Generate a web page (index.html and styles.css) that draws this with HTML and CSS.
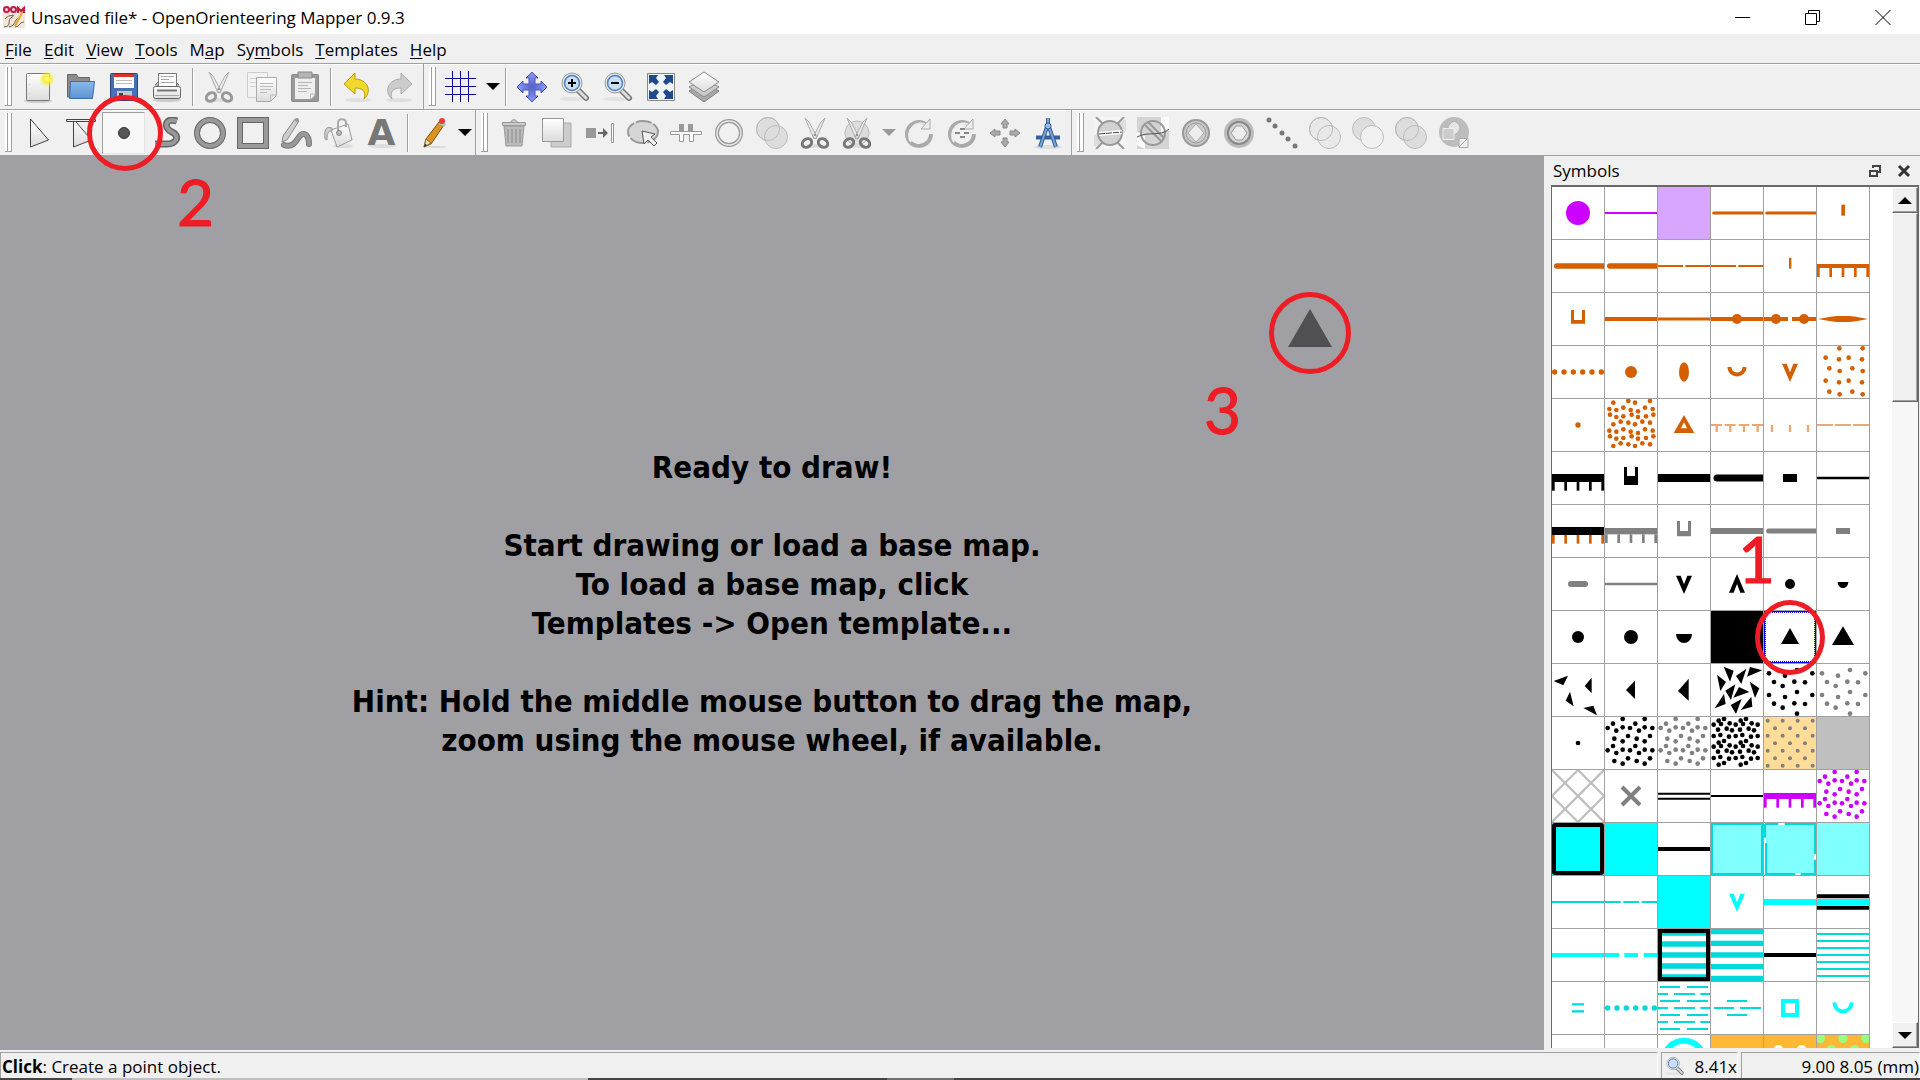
FILE: index.html
```html
<!DOCTYPE html>
<html lang="en">
<head>
	<meta charset="UTF-8">
	<title>Unsaved file* - OpenOrienteering Mapper 0.9.3</title>
	<link rel="stylesheet" href="styles.css">
</head>
<body>
<svg class="defs" aria-hidden="true">
	<defs> <!-- gradients and shapes shared by the toolbar icons -->
		<linearGradient id="paper" x1="0" y1="0" x2="0" y2="1"><stop offset="0" stop-color="#fff"/><stop offset="1" stop-color="#dcdcdc"/></linearGradient>
		<linearGradient id="blue" x1="0" y1="0" x2="0" y2="1"><stop offset="0" stop-color="#8db8e6"/><stop offset="1" stop-color="#5a93d2"/></linearGradient>
		<radialGradient id="sun"><stop offset="0" stop-color="#fffcc0"/><stop offset=".4" stop-color="#f8ee30"/><stop offset="1" stop-color="#f8ee30" stop-opacity="0"/></radialGradient>
		<radialGradient id="move"><stop offset="0" stop-color="#5560c8"/><stop offset="1" stop-color="#8e9bf8"/></radialGradient>
		<symbol id="scissors" viewBox="0 0 32 32">
			<ellipse cx="16" cy="29" rx="11" ry="2" fill="#dedede"/>
			<path d="M6 1l4 4 8 15-3 2zM26 1l-4 4-8 15 3 2z" fill="#ececec" stroke="#aaa"/>
			<circle cx="16" cy="18" r="1" fill="#888"/>
			<ellipse cx="8" cy="26" rx="5" ry="4" transform="rotate(-35 8 26)" fill="none" stroke="currentColor" stroke-width="3"/>
			<ellipse cx="24" cy="26" rx="5" ry="4" transform="rotate(35 24 26)" fill="none" stroke="currentColor" stroke-width="3"/>
		</symbol>
		<symbol id="lens" viewBox="0 0 32 32">
			<ellipse cx="14" cy="28" rx="13" ry="2" fill="#e2e2e2"/>
			<path d="M19 19l8 8" stroke="#777" stroke-width="6" stroke-linecap="round"/>
			<path d="M19 19l8 8" stroke="#ddd" stroke-width="3" stroke-linecap="round"/>
			<circle cx="13" cy="12" r="10" fill="#e8e8e8" stroke="#999"/>
			<circle cx="13" cy="12" r="7.5" fill="#c9ddf3" stroke="#4f7fb8" stroke-width="1.5"/>
		</symbol>
		<symbol id="pencil" viewBox="-4 0 32 32">
			<ellipse cx="15" cy="30" rx="10" ry="1" fill="#d8d8d8"/>
			<path d="M18 5l5 3-13 19-7 3 2-8z" fill="#d9951f" stroke="#7c5216"/>
			<path d="M5 22l5 4-7 4z" fill="#f3dcae" stroke="#8a6a3a"/>
			<path d="M3 30l1-3 2 1z" fill="#222"/>
			<path d="M18 7l5 3 2-3-5-4z" fill="#bbb"/>
			<circle cx="21" cy="4" r="3" fill="#ee3a3a"/>
		</symbol>
		<symbol id="discs" viewBox="0 0 32 32">
			<circle cx="12" cy="12" r="11.5"/><circle cx="20" cy="20" r="11.5"/><circle cx="12" cy="12" r="11.5" fill="none"/>
		</symbol>
	</defs>
</svg>
<div class="window">
	<header class="title-bar">
		<svg class="app-logo" viewBox="0 0 22 22"><rect width="22" height="22" fill="#f1e6da"/><path d="M1 21C10 20 3 14 9 11S4 9 2 13M6 21c8-2 4-7 10-9M12 21c6-1 3-4 9-5" fill="none" stroke="#6b5b50"/><path d="M20 5L12 20" stroke="#e8a52c" stroke-width="2"/><circle cx="3.500" cy="3.500" r="2.500" fill="none" stroke="#c41846" stroke-width="2"/><circle cx="10.500" cy="3.500" r="2.500" fill="none" stroke="#c41846" stroke-width="2"/><path d="M15 7V2l3 3 3-3v5" fill="none" stroke="#c41846" stroke-width="2"/></svg>
		<h1 class="title">Unsaved file* - OpenOrienteering Mapper 0.9.3</h1>
		<div class="window-buttons">
			<button class="window-button" aria-label="Minimize"><svg viewBox="0 0 16 16"><path d="M0 8.500h15"/></svg></button>
			<button class="window-button" aria-label="Restore"><svg viewBox="0 0 16 16"><path d="M.5 4.500h11v11H.5zM3.500 4V1.500h11v11H12"/></svg></button>
			<button class="window-button" aria-label="Close"><svg viewBox="0 0 16 16"><path d="M.5 1l15 15M15.500 1l-15 15"/></svg></button>
		</div>
	</header>
	<nav class="menu-bar">
		<a class="menu" href="#"><u>F</u>ile</a>
		<a class="menu" href="#"><u>E</u>dit</a>
		<a class="menu" href="#"><u>V</u>iew</a>
		<a class="menu" href="#"><u>T</u>ools</a>
		<a class="menu" href="#">M<u>a</u>p</a>
		<a class="menu" href="#">Sy<u>m</u>bols</a>
		<a class="menu" href="#"><u>T</u>emplates</a>
		<a class="menu" href="#"><u>H</u>elp</a>
	</nav>

	<div class="toolbar-row">
		<div class="toolbar"> <!-- file and edit -->
			<button class="tool" aria-label="New"><svg viewBox="0 0 32 32"><ellipse cx="16" cy="30" rx="14" ry="2" fill="#ccc"/><rect x="4.500" y="2.500" width="23" height="27" rx="1" fill="url(#paper)" stroke="#777"/><path d="M7.500 4v24" stroke="#ccc" stroke-dasharray="1 8"/><circle cx="25" cy="8" r="8" fill="url(#sun)"/></svg></button>
			<button class="tool" aria-label="Open"><svg viewBox="0 0 32 32"><path d="M2.500 26V3.500h9l2 3h11V26z" fill="#8c8c8c" stroke="#666"/><path d="M5.500 10.500h24l-2 17h-23z" fill="url(#blue)" stroke="#3d6ea8"/></svg></button>
			<button class="tool" aria-label="Save"><svg viewBox="0 0 32 32"><rect x="2.500" y="2.500" width="27" height="27" rx="1" fill="#4671b5" stroke="#29467c"/><path d="M6 3h20v14H6z" fill="#fff"/><path d="M6 3h20v3H6z" fill="#d8332c"/><path d="M8 9.500h16M8 12.500h16" stroke="#bbb"/><path d="M9 20h15v9H9z" fill="#c6c6c6"/><path d="M11 22h4v7h-4z" fill="#444"/></svg></button>
			<button class="tool" aria-label="Print"><svg viewBox="0 0 32 32"><ellipse cx="16" cy="29" rx="14" ry="2" fill="#ccc"/><path d="M4 14l3-3h18l3 3z" fill="#ddd" stroke="#777"/><path d="M7.500 2.500h18v13h-18z" fill="#fff" stroke="#777"/><path d="M10 5.500h13M10 8.500h8M10 11.500h13" stroke="#aaa"/><rect x="2.500" y="15.500" width="27" height="12" rx="2" fill="url(#paper)" stroke="#666"/><path d="M6 19.500h20" stroke="#777" stroke-width="2"/><path d="M4 24.500h24" stroke="#aaa"/></svg></button>
			<span class="separator"></span>
			<button class="tool grey" aria-label="Cut"><svg><use href="#scissors"/></svg></button>
			<button class="tool" aria-label="Copy"><svg viewBox="0 0 32 32"><path d="M1.500 1.500h20v25h-20z" fill="#f2f2f2" stroke="#ccc"/><path d="M4 7.500h14M4 11.500h8M4 15.500h8" stroke="#d2d2d2"/><path d="M10.500 6.500h20v18l-6 6h-14z" fill="url(#paper)" stroke="#aaa"/><path d="M14 12.500h13M14 15.500h13M14 18.500h11M14 21.500h7M24.500 30v-6h6" fill="none" stroke="#bbb"/></svg></button>
			<button class="tool" aria-label="Paste"><svg viewBox="0 0 32 32"><rect x="2.500" y="3.500" width="27" height="27" rx="1" fill="#999" stroke="#888"/><path d="M6 7h20v17l-4 4H6z" fill="#eee"/><path d="M9 1h14v6H9z" fill="#b5b5b5" stroke="#888"/><path d="M9 11.500h14M9 14.500h10M9 17.500h13M9 20.500h9M21.500 28v-5h5" fill="none" stroke="#b5b5b5"/></svg></button>
			<span class="separator"></span>
			<button class="tool" aria-label="Undo"><svg viewBox="0 0 32 32"><ellipse cx="17" cy="29" rx="13" ry="2" fill="#dedede"/><path d="M3 13L14 2v6c12 0 18 12 9 20 3-8-2-11-9-11v6z" fill="#f0d92c" stroke="#b99b0c"/></svg></button>
			<button class="tool" aria-label="Redo"><svg viewBox="0 0 32 32"><ellipse cx="15" cy="29" rx="13" ry="2" fill="#dedede"/><path d="M28 13L17 2v6C5 8-1 20 8 28c-3-8 2-11 9-11v6z" fill="#ccc" stroke="#aaa"/></svg></button>
		</div>
		<div class="toolbar"> <!-- view -->
			<button class="tool wide" aria-label="Show grid"><svg viewBox="0 0 32 32"><path d="M0 7.500h31M0 15.500h31M0 23.500h31M7.500 0v31M15.500 0v31M23.500 0v31" stroke="#000080" fill="none"/></svg><span class="arrow"></span></button>
			<span class="separator"></span>
			<button class="tool" aria-label="Move"><svg viewBox="0 0 32 32"><path d="M16 1l6 6h-3v6h6v-3l6 6-6 6v-3h-6v6h3l-6 6-6-6h3v-6H7v3l-6-6 6-6v3h6V7h-3z" fill="url(#move)" stroke="#4a55b8"/></svg></button>
			<button class="tool" aria-label="Zoom in"><svg viewBox="0 0 32 32"><use href="#lens"/><path d="M9 12h8M13 8v8" stroke="#000" stroke-width="2"/></svg></button>
			<button class="tool" aria-label="Zoom out"><svg viewBox="0 0 32 32"><use href="#lens"/><path d="M9 12h8" stroke="#000" stroke-width="2"/></svg></button>
			<button class="tool" aria-label="Show whole map"><svg viewBox="0 0 32 32"><path d="M2.500 2.500h27v27h-27z" fill="#eef3f4" stroke="#888"/><path d="M4 4h9l-2 3 3 4-3 3-4-3-3 2zM28 4h-9l2 3-3 4 3 3 4-3 3 2zM4 28h9l-2-3 3-4-3-3-4 3-3-2zM28 28h-9l2-3-3-4 3-3 4 3 3-2z" fill="#204a87"/></svg></button>
			<button class="tool" aria-label="Layers"><svg viewBox="0 0 32 32"><path d="M1 20l15-8 15 8-15 11z" fill="#aaa" stroke="#777"/><path d="M1 16l15-8 15 8-15 10z" fill="#ccc" stroke="#888"/><path d="M1 11L16 1l15 10-15 10z" fill="url(#paper)" stroke="#888"/></svg></button>
		</div>
	</div>

	<div class="toolbar-row">
		<div class="toolbar"> <!-- drawing tools -->
			<button class="tool" aria-label="Edit objects"><svg viewBox="0 0 32 32"><path d="M8.500 2v28l18-7z" fill="url(#paper)" stroke="#444"/></svg></button>
			<button class="tool" aria-label="Edit lines"><svg viewBox="0 0 32 32"><path d="M8.500 2v28l18-7z" fill="url(#paper)" stroke="#444"/><path d="M1.500 2.500h29v2h-29z" fill="#eee" stroke="#444"/></svg></button>
			<button class="tool pressed" aria-label="Set point objects">
				<svg viewBox="0 0 32 32"><circle cx="16" cy="16" r="5.500" fill="#555" stroke="#333"/></svg>
				<span class="mark mark-tool"><span class="digit">2</span></span>
			</button>
			<button class="tool" aria-label="Draw paths"><svg viewBox="0 0 32 32"><path d="M26 4c-12-4-14 7-5 11s4 13-7 12H4" fill="none" stroke="#666" stroke-width="7"/><path d="M26 4c-12-4-14 7-5 11s4 13-7 12H4" fill="none" stroke="#999" stroke-width="4"/></svg></button>
			<button class="tool" aria-label="Draw circles"><svg viewBox="0 0 32 32"><g fill="none"><circle cx="16" cy="16" r="13" stroke="#666" stroke-width="6"/><circle cx="16" cy="16" r="13" stroke="#999" stroke-width="4"/></g></svg></button>
			<button class="tool" aria-label="Draw rectangles"><svg viewBox="0 0 32 32"><g fill="none"><path d="M3 3h26v26H3z" stroke="#666" stroke-width="6"/><path d="M3 3h26v26H3z" stroke="#999" stroke-width="4"/></g></svg></button>
			<button class="tool" aria-label="Draw free-handedly"><svg viewBox="0 0 32 32"><g fill="none" stroke-linecap="round"><path d="M4 28c8 3 12-3 15-8 4-6 10-3 10 7" stroke="#777" stroke-width="6"/><path d="M4 28c8 3 12-3 15-8 4-6 10-3 10 7" stroke="#999" stroke-width="4"/></g><path d="M15 2l4 2-12 19-5 2 1-6z" fill="#ccc" stroke="#888"/><circle cx="17" cy="3" r="2" fill="#999"/></svg></button>
			<button class="tool" aria-label="Fill bounded areas"><svg viewBox="0 0 32 32"><ellipse cx="20" cy="29" rx="10" ry="2" fill="#ddd"/><path d="M8 13l17-6 4 16-15 7z" fill="url(#paper)" stroke="#999"/><path d="M15 15V6c0-5 8-5 8 0v4" fill="none" stroke="#aaa" stroke-width="2"/><path d="M9 11C3 9 1 12 2 22l2 1c0-6 1-9 5-9z" fill="#ccc" stroke="#999"/><circle cx="16" cy="16" r="2.500" fill="#bbb" stroke="#888"/></svg></button>
			<button class="tool" aria-label="Write text"><svg viewBox="0 0 32 32"><ellipse cx="16" cy="29" rx="14" ry="2" fill="#ddd"/></svg><b class="letter">A</b></button>
			<span class="separator"></span>
			<button class="tool wide" aria-label="Paint on template"><svg><use href="#pencil"/></svg><span class="arrow"></span></button>
		</div>
		<div class="toolbar"> <!-- object editing -->
			<button class="tool" aria-label="Delete"><svg viewBox="0 0 32 32"><path d="M6 9h20l-2 20H8z" fill="#bbb" stroke="#999"/><path d="M10 12v14M14 12v14M18 12v14M22 12v14" stroke="#888"/><path d="M4.500 5.500h23v3h-23zM13 5c0-3 6-3 6 0" fill="#ccc" stroke="#999"/></svg></button>
			<button class="tool" aria-label="Duplicate"><svg viewBox="0 0 32 32"><path d="M10 6h20v24H10z" fill="#ccc" stroke="#aaa"/><path d="M1.500 1.500h21v23h-21z" fill="url(#paper)" stroke="#999"/></svg></button>
			<button class="tool" aria-label="Switch symbol"><svg viewBox="0 0 32 32"><path d="M2 11h10v10H2z" fill="#999"/><path d="M14 16h6" stroke="#666" stroke-width="2"/><path d="M19 11l5 5-5 5z" fill="#666"/><path d="M27.500 6.500h2v19h-2z" fill="#fff" stroke="#999"/></svg></button>
			<button class="tool" aria-label="Fill / create border"><svg viewBox="0 0 32 32"><ellipse cx="16" cy="15" rx="15" ry="11" fill="#d6d6d6" stroke="#999" stroke-width="2" stroke-dasharray="16 2"/><path d="M15 14l13 3-4 3 6 6-3 3-6-6-4 4z" fill="#eee" stroke="#555"/></svg></button>
			<button class="tool" aria-label="Switch dashes"><svg viewBox="0 0 32 32"><path d="M9 7h5v10H9zM18 7h5v10h-5z" fill="#999"/><path d="M.5 14.500h31v3h-8v7h-4v-7h-6v7h-4v-7h-9z" fill="#fff" stroke="#999"/></svg></button>
			<button class="tool" aria-label="Connect paths"><svg viewBox="0 0 32 32"><g fill="none"><circle cx="16" cy="16" r="12" stroke="#999" stroke-width="4"/><circle cx="16" cy="16" r="12" stroke="#e8e8e8" stroke-width="1.500"/></g></svg></button>
			<button class="tool" aria-label="Unify areas"><svg class="discs"><use href="#discs"/></svg></button>
			<button class="tool dark" aria-label="Cut object"><svg><use href="#scissors"/></svg></button>
			<button class="tool wide dark" aria-label="Cut away"><svg viewBox="0 0 32 32"><circle cx="16" cy="16" r="12" fill="#ddd" stroke="#bbb"/><use href="#scissors"/></svg><span class="arrow pale"></span></button>
			<button class="tool" aria-label="Rotate objects"><svg viewBox="0 0 32 32"><path d="M24 8a12 12 0 1 0 4 9" fill="none" stroke="#aaa" stroke-width="4"/><path d="M24 8a12 12 0 0 0-16 17" fill="none" stroke="#eee" stroke-width="2"/><path d="M27 2v10H18z" fill="#eee" stroke="#aaa"/></svg></button>
			<button class="tool" aria-label="Rotate pattern"><svg viewBox="0 0 32 32"><path d="M24 8a12 12 0 1 0 4 9" fill="none" stroke="#aaa" stroke-width="4"/><path d="M24 8a12 12 0 0 0-16 17" fill="none" stroke="#eee" stroke-width="2"/><path d="M27 2v10H18z" fill="#eee" stroke="#aaa"/><path d="M14 12h5M9 16h5M18 16h5M14 20h5" stroke="#888" stroke-width="2"/></svg></button>
			<button class="tool" aria-label="Scale objects"><svg viewBox="0 0 32 32"><path d="M16 2l4 5h-2v4h-4V7h-2zM16 30l4-5h-2v-4h-4v4h-2zM1 16l5-4v2h5v4H6v2zM31 16l-5-4v2h-5v4h5v2z" fill="#aaa" stroke="#888"/></svg></button>
			<button class="tool" aria-label="Measure lengths and areas"><svg viewBox="0 0 32 32"><ellipse cx="16" cy="30" rx="14" ry="2" fill="#ddd"/><path d="M16 1v6M15 10L8 30M17 10l7 20M4 20.500h24" fill="none" stroke="#34619a" stroke-width="4"/><path d="M16 1v6M15 10L8 30M17 10l7 20" fill="none" stroke="#7ba3d4" stroke-width="2"/><circle cx="16" cy="9" r="3" fill="#9bbce2" stroke="#34619a"/></svg></button>
		</div>
		<div class="toolbar"> <!-- advanced editing -->
			<button class="tool" aria-label="Cutout"><svg viewBox="0 0 32 32"><path d="M0 0h32v32H0z" fill="#f5f5f5"/><path d="M0 18l8-4v12L0 30zM24 6l8-4v12l-8 8z" fill="#ddd"/><path d="M2 0l8 8M30 0l-8 8M2 32l8-8M22 24l8 8" stroke="#999" stroke-width="2"/><circle cx="16" cy="16" r="12" fill="#d2d2d2" stroke="#999" stroke-width="2"/><path d="M5 17l23-2" stroke="#fff" stroke-width="4"/><path d="M5 17l23-2" stroke="#444" stroke-dasharray="6 1"/></svg></button>
			<button class="tool" aria-label="Cut away area"><svg viewBox="0 0 32 32"><path d="M0 0h32v32H0z" fill="#d4d4d4"/><path d="M0 15l8 4v13L0 28zM24 0h8v12l-8 4z" fill="#fafafa"/><circle cx="16" cy="16" r="12" fill="none" stroke="#999" stroke-width="2"/><path d="M7 7l18 18M11 5l16 16" stroke="#999" stroke-width="2"/><path d="M0 20c10-6 24 0 32-8" fill="none" stroke="#555"/></svg></button>
			<button class="tool" aria-label="Distribute points"><svg viewBox="0 0 32 32"><circle cx="16" cy="16" r="13" fill="#c9c9c9" stroke="#999" stroke-width="2"/><circle cx="16" cy="16" r="10" fill="#ccc" stroke="#999"/><path d="M16 7l8 9-8 9-8-9z" fill="#eee" stroke="#aaa"/></svg></button>
			<button class="tool" aria-label="Buffer"><svg viewBox="0 0 32 32"><circle cx="16" cy="16" r="15" fill="#bbb"/><circle cx="16" cy="16" r="11" fill="#d4d4d4" stroke="#888" stroke-width="2"/><path d="M13 9h6l5 7-5 7h-6l-5-7z" fill="#eee" stroke="#999"/></svg></button>
			<button class="tool" aria-label="Points along path"><svg viewBox="0 0 32 32"><g fill="#777"><circle cx="3" cy="3" r="2.500"/><circle cx="9" cy="9" r="2.500"/><circle cx="16" cy="16" r="2.500"/><circle cx="22" cy="22" r="2.500"/><circle cx="29" cy="29" r="2.500"/></g></svg></button>
			<button class="tool" aria-label="Intersect areas"><svg class="discs hollow" viewBox="0 0 32 32"><circle cx="12" cy="12" r="11.500"/><circle cx="20" cy="20" r="11.500"/><circle class="outline" cx="12" cy="12" r="11.500"/></svg></button>
			<button class="tool" aria-label="Area difference"><svg class="discs" viewBox="0 0 32 32"><circle cx="12" cy="12" r="11.500"/><circle class="hole" cx="20" cy="20" r="11.500"/></svg></button>
			<button class="tool" aria-label="Area XOR"><svg class="discs"><use href="#discs"/></svg></button>
			<button class="tool" aria-label="Convert to curves"><svg viewBox="0 0 32 32"><circle cx="16" cy="15" r="15" fill="#bdbdbd"/><path d="M16 4c-10 5-6 12 0 14 8-4 8-10 0-14z" fill="#e5e5e5" stroke="#aaa"/><path d="M5 11.500h11v11H5z" fill="#ccc" stroke="#eee"/><path d="M21 21.500h9v9h-9zM21 30l9-9" fill="#eee" stroke="#aaa"/></svg></button>
		</div>
	</div>

	<main class="workspace">
		<section class="canvas">
			<p class="hint">Ready to draw!<br><br>Start drawing or load a base map.<br>To load a base map, click<br>Templates -&gt; Open template...<br><br>Hint: Hold the middle mouse button to drag the map,<br>zoom using the mouse wheel, if available.</p>
			<div class="mark mark-canvas">
				<svg viewBox="0 0 44 38"><path d="M22 0l22 38H0z" fill="#505052"/></svg>
				<span class="digit">3</span>
			</div>
		</section>
		<aside class="dock">
			<div class="dock-title">
				<h2 class="dock-name">Symbols</h2>
				<button class="dock-button" aria-label="Float"><svg viewBox="0 0 14 14"><path d="M5 4V2h7v6h-2M2 7h7v5H2z" fill="none" stroke="#444" stroke-width="2"/></svg></button>
				<button class="dock-button" aria-label="Close"><svg viewBox="0 0 14 14"><path d="M2 2l10 10M12 2L2 12" stroke="#333" stroke-width="3"/></svg></button>
			</div>
			<div class="symbol-list">
				<div class="symbols" id="symbols"></div>
				<div class="scrollbar">
					<button class="scroll-button" aria-label="Scroll up"><span class="arrow up"></span></button>
					<div class="scroll-thumb"></div>
					<button class="scroll-button last" aria-label="Scroll down"><span class="arrow"></span></button>
				</div>
			</div>
		</aside>
	</main>

	<footer class="status-bar">
		<div class="panel message"><b>Click</b>: Create a point object.</div>
		<div class="panel zoom"><svg viewBox="0 0 32 32"><use href="#lens"/></svg>8.41x</div>
		<div class="panel position">9.00 8.05 (mm)</div>
	</footer>
	<div class="edge"></div>
</div>
<script src="script.js"></script>
</body>
</html>
```
FILE: styles.css
```css
* {
	box-sizing: border-box;
}

body {
	margin: 0;
	background: #f0f0f0;
	color: #000;
	font-family: "Open Sans", "Noto Sans", sans-serif;
	font-size: 17px;
}

button {
	margin: 0;
	padding: 0;
	border: 0;
	background: none;
	color: inherit;
	font: inherit;
}

.defs {
	position: absolute;
	width: 0;
	height: 0;
}

.window {
	display: flex;
	flex-direction: column;
	height: 100vh;
	overflow: hidden;
}

/* title bar */
.title-bar {
	display: flex;
	align-items: center;
	height: 34px;
	padding: 0 2px 0 3px;
	background: #fff;
}

.app-logo {
	width: 22px;
	height: 22px;
	margin-right: 6px;
}

.title {
	flex: 1;
	margin: 0;
	font-size: 17px;
	font-weight: normal;
}

.window-buttons {
	display: flex;
}

.window-button {
	display: flex;
	align-items: center;
	justify-content: center;
	width: 70px;
	height: 34px;
}

.window-button svg {
	width: 16px;
	height: 16px;
	fill: none;
	stroke: #000;
}

/* menu */
.menu-bar {
	display: flex;
	align-items: center;
	gap: 12px;
	height: 29px;
	padding: 2px 0 0 5px;
}

.menu {
	color: #000;
	text-decoration: none;
}

.menu u {
	text-underline-offset: 2px;
}

/* toolbars */
.toolbar-row {
	display: flex;
	height: 46px;
	border-top: 1px solid #a0a0a0;
	box-shadow: inset 0 1px #fff;
}

.toolbar {
	display: flex;
	align-items: center;
	padding-right: 2px;
	border-right: 1px solid #a0a0a0;
}

.toolbar:last-child {
	border-right: 0;
}

.toolbar::before { /* drag handle */
	content: "";
	width: 6px;
	height: 38px;
	margin: 0 4px 0 5px;
	border: 1px solid #a0a0a0;
	border-width: 0 1px 1px 0;
	background: linear-gradient(90deg, #fff 2px, #a0a0a0 2px, #a0a0a0 3px, #fff 3px);
}

.tool {
	position: relative;
	display: flex;
	align-items: center;
	justify-content: center;
	width: 43px;
	height: 42px;
}

.tool > svg {
	width: 32px;
	height: 32px;
}

.wide {
	width: 61px;
	justify-content: flex-start;
	gap: 9px;
	padding-left: 5px;
}

.grey {
	color: #999;
}

.dark {
	color: #777;
}

.pressed {
	border: 1px solid #a0a0a0;
	border-right-color: #e3e3e3;
	border-bottom-color: #e3e3e3;
	background: #f8f8f8;
}

.letter {
	position: absolute;
	color: #777;
	font-family: "DejaVu Sans", sans-serif;
	font-size: 36px;
	line-height: 42px;
}

.discs {
	fill: #ddd;
	stroke: #bbb;
}

.hollow {
	fill: #e8e8e8;
}

.hole {
	fill: #f0f0f0;
}

.outline {
	fill: none;
}

.arrow {
	border: 7px solid transparent;
	border-top-color: #000;
	border-bottom: 0;
}

.arrow.up {
	border-top: 0;
	border-bottom: 7px solid #000;
}

.arrow.pale {
	border-top-color: #999;
}

.separator {
	width: 1px;
	height: 38px;
	margin: 0 4px;
	background: #a0a0a0;
	box-shadow: 1px 0 #fff;
}

/* map area */
.workspace {
	flex: 1;
	display: flex;
	min-height: 0;
}

.canvas {
	position: relative;
	flex: 1;
	display: flex;
	align-items: center;
	justify-content: center;
	background: #a0a0a4;
}

.hint {
	margin: 0;
	padding-top: 2px;
	font-family: "DejaVu Sans Condensed", "Open Sans", sans-serif;
	font-size: 31px;
	font-weight: bold;
	line-height: 39px;
	text-align: center;
}

/* red circles with step numbers */
.mark {
	position: absolute;
	z-index: 2;
	border: 5px solid #ee1c25;
	border-radius: 50%;
}

.digit {
	position: absolute;
	color: #ee1c25;
	font-family: Lato, sans-serif;
	font-size: 64px;
	line-height: 64px;
	-webkit-text-stroke: 1px #ee1c25;
}

.mark-tool {
	top: -18px;
	left: -16px;
	width: 76px;
	height: 76px;
}

.mark-tool .digit {
	top: 70px;
	left: 85px;
}

.mark-canvas {
	top: 137px;
	right: 193px;
	width: 82px;
	height: 82px;
}

.mark-canvas svg {
	width: 44px;
	margin: 12px 14px;
}

.mark-canvas .digit {
	top: 81px;
	left: -70px;
}

.mark-symbol {
	top: -11px;
	left: -9px;
	width: 70px;
	height: 75px;
}

.mark-symbol .digit {
	top: -78px;
	left: -22px;
}

/* symbol dock */
.dock {
	display: flex;
	flex-direction: column;
	width: 376px;
	padding: 0 1px 2px 7px;
	border-top: 1px solid #a0a0a0;
}

.dock-title {
	display: flex;
	align-items: center;
	gap: 15px;
	height: 29px;
	padding-right: 8px;
}

.dock-name {
	flex: 1;
	margin: 0;
	padding-left: 2px;
	font-size: 17px;
	font-weight: normal;
}

.dock-button {
	width: 14px;
	height: 20px;
}

.dock-button svg {
	display: block;
	width: 14px;
	height: 14px;
}

.symbol-list {
	flex: 1;
	display: flex;
	justify-content: space-between;
	min-height: 0;
	overflow: hidden;
	border: 1px solid #696969;
	border-width: 2px 1px 0 1px;
	background: #fff;
}

.symbols {
	display: grid;
	grid-template-columns: repeat(6, 53px);
	grid-auto-rows: 53px;
}

.symbol {
	position: relative;
	border: 1px solid #a0a0a0;
	border-width: 0 1px 1px 0;
}

.symbol > svg {
	display: block;
	width: 52px;
	height: 52px;
}

.selected::before {
	content: "";
	position: absolute;
	inset: 0;
	border: 1px solid #0000ff;
	outline: 1px dotted #0000ff;
	outline-offset: -2px;
}

.scrollbar {
	display: flex;
	flex-direction: column;
	width: 26px;
	background: #f7f7f7;
}

.scroll-button,
.scroll-thumb {
	flex-shrink: 0;
	height: 26px;
	border: 1px solid #fff;
	border-right-color: #696969;
	border-bottom-color: #696969;
	background: #f0f0f0;
	box-shadow: inset -1px -1px #a0a0a0;
}

.scroll-button {
	display: flex;
	align-items: center;
	justify-content: center;
}

.scroll-thumb {
	height: 22%;
}

.last {
	margin-top: auto;
}

/* status bar */
.status-bar {
	display: flex;
	gap: 3px;
	height: 28px;
	padding-top: 2px;
}

.panel {
	display: flex;
	align-items: center;
	padding-top: 1px;
	border: 1px solid #a0a0a0;
	border-right-color: #fff;
	border-bottom: 0;
}

.message {
	flex: 1;
	padding-left: 1px;
	white-space: pre;
}

.zoom {
	justify-content: space-between;
	width: 77px;
}

.zoom svg {
	width: 20px;
	height: 20px;
	margin-left: 3px;
}

.position {
	justify-content: flex-end;
	width: 179px;
}

.edge {
	height: 2px;
	background: linear-gradient(90deg, #444 72px, #c0c0c0 72px, #c0c0c0 588px, #444 588px, #444 887px, #707070 887px, #707070 954px, #444 954px);
}
```
FILE: script.js
```js
'use strict';
// every symbol is drawn in a 156 x 156 box
const brown = '#d45f00';
const tan = '#eba873';
const black = '#000';
const grey = '#808080';
const violet = '#cc00ff';
const cyan = '#00ffff';
const teal = '#00d8dc';

const fill = (c) => `<rect width="156" height="156" fill="${c}"/>`;
const rect = (c, x, y, w, h) => `<rect x="${x}" y="${y}" width="${w}" height="${h}" fill="${c}"/>`;
const path = (c, w, d, extra = '') => `<path d="${d}" fill="none" stroke="${c}" stroke-width="${w}" ${extra}/>`;
const shape = (c, d) => `<path d="${d}" fill="${c}"/>`;
const line = (c, w) => path(c, w, 'M0 78H156');
const round = (c, w, x, end = 170) => path(c, w, `M${x} 78H${end}`, 'stroke-linecap="round"');
const disc = (c, r, x = 78, y = 78) => `<circle cx="${x}" cy="${y}" r="${r}" fill="${c}"/>`;
const dots = (c, r, list) => list.map(([x, y]) => disc(c, r, x, y)).join('');
// horizontal bar with five teeth below it
const comb = (c, top, bottom, end, teeth = c) =>
	[0, 37, 74, 111, 148].map((x) => rect(teeth, x, bottom, 8, end - bottom)).join('') + rect(c, 0, top, 156, bottom - top);
const cup = (c, top, inner, bottom) => shape(c, `M57 ${top}h9V${inner}h24V${top}h9V${bottom}H57z`);
const vee = (c) => shape(c, 'M54 53h14l10 26 10-26h14L78 108z');

// dot layouts
const sparse = [[67, 7], [137, 7], [26, 35], [95, 35], [66, 40], [135, 40], [37, 67], [106, 67], [68, 75], [137, 75], [26, 104], [95, 104], [66, 109], [135, 109], [37, 137], [106, 137], [68, 145], [137, 145]];
const packed = [[25, 11], [70, 6], [90, 11], [135, 6], [13, 30], [34, 33], [55, 26], [77, 33], [99, 37], [120, 26], [143, 30], [15, 47], [34, 54], [55, 52], [80, 47], [99, 54], [123, 52], [145, 47], [25, 76], [47, 68], [70, 71], [90, 76], [112, 68], [135, 71], [13, 95], [34, 98], [55, 91], [77, 98], [99, 102], [120, 91], [143, 95], [15, 112], [34, 119], [55, 117], [80, 112], [99, 119], [123, 117], [145, 112], [25, 141], [47, 133], [70, 136], [90, 141], [112, 133], [135, 136]];
const loose = [[99, 18], [15, 28], [63, 35], [145, 28], [30, 54], [91, 53], [123, 55], [56, 66], [99, 84], [15, 93], [145, 93], [63, 99], [30, 119], [91, 118], [123, 120], [56, 131], [99, 149]];
const medium = [[53, 6], [119, 6], [24, 20], [91, 20], [8, 33], [53, 31], [75, 33], [119, 31], [142, 33], [34, 41], [102, 41], [69, 57], [135, 57], [28, 65], [95, 65], [53, 73], [119, 73], [24, 87], [91, 87], [8, 100], [53, 98], [75, 100], [119, 98], [142, 100], [34, 108], [102, 108], [69, 124], [135, 124], [28, 132], [95, 132], [53, 140], [119, 140]];
const dense = [];
[[39, 6], [23, 11], [8, 23], [30, 21], [56, 19], [21, 38], [47, 35], [63, 40], [8, 57], [28, 54], [54, 59]].forEach(([x, y]) => {
	for (let i = 0; i < 3; i++) {
		for (let j = 0; j < 3; j++) {
			if (x + 66 * i < 150 && y + 66 * j < 148) dense.push([x + 66 * i, y + 66 * j]);
		}
	}
});
const orchard = [];
for (let row = 0; row < 7; row++) {
	for (let x = row % 2 ? 33 : 11; x < 156; x += 45) orchard.push([x, 11 + row * 22.5]);
}

const symbols = [
	disc(violet, 36), line(violet, 6), fill('#d9a6ff'), round(brown, 9, 8), round(brown, 9, 8), rect(brown, 73, 53, 11, 33),

	round(brown, 16, 14), round(brown, 16, 14), path(brown, 6, 'M0 78h75M82 78h74'), path(brown, 6, 'M0 78h75M82 78h74'), rect(brown, 75, 53, 7, 33), comb(brown, 72, 84, 111),

	cup(brown, 51, 81, 92), line(brown, 12), line(brown, 9), line(brown, 12) + disc(brown, 15),
	path(brown, 12, 'M0 78h72M84 78h72') + disc(brown, 15, 36) + disc(brown, 15, 120), shape(brown, 'M3 78Q50 69 60 69H96Q110 69 153 78Q110 87 96 87H60Q50 87 3 78z'),

	dots(brown, 8, [8, 36, 64, 92, 120, 148].map((x) => [x, 78])), disc(brown, 18), '<ellipse cx="78" cy="78" rx="15" ry="29" fill="' + brown + '"/>',
	path(brown, 12, 'M55 63C57 93 99 93 101 63'), vee(brown), dots(brown, 7, sparse),

	disc(brown, 8), dots(brown, 7, packed), shape(brown, 'M78 48l31 54H47z') + shape('#fff', 'M78 70l9 18H69z'),
	path(tan, 6, 'M0 78h33M41 78h33M83 78h32M123 78h33') + path(tan, 7, 'M17 78v21M58 78v21M99 78v21M140 78v21'),
	path(tan, 7, 'M24 78v21M78 78v21M132 78v21'), path(tan, 6, 'M0 78h48M54 78h48M108 78h48'),

	comb(black, 66, 90, 116), cup(black, 45, 72, 99), line(black, 24), round(black, 21, 18), rect(black, 57, 66, 42, 24), line(black, 7),

	comb(black, 66, 90, 116, brown), comb(grey, 69, 88, 114), cup(grey, 48, 78, 94), line(grey, 18), round(grey, 15, 14), rect(grey, 57, 69, 42, 18),

	round(grey, 18, 57, 99), line(grey, 7), vee(black), shape(black, 'M78 48l24 56H88L78 78 68 104H54z'), disc(black, 15), shape(black, 'M62 72h32c-2 24-30 24-32 0z'),

	disc(black, 18), disc(black, 21), shape(black, 'M54 69h48c-3 36-45 36-48 0z'), fill(black), shape(black, 'M78 51l27 48H51z'), shape(black, 'M78 46l33 56H45z'),

	shape(black, 'M5 51L48 35 34 64zM119 41L98 66l21 22zM54 83l-13 27 24 17zM94 132l30-7 11 29z'), shape(black, 'M90 50L63 78l27 27z'), shape(black, 'M92 44L60 81l32 29z'),
	shape(black, 'M38 8l30 12-11 33zM106 14L75 36l16 24zM117 9l37 10-46 19zM18 32l27 22-17 27zM73 61L43 80l17 28zM84 69l31 15-48 17zM116 53l29 20-13 29zM39 90l-28 43 33-13zM92 105l-33 18 16 27zM121 98l-32 40 35-10z'),
	dots(black, 7, loose), dots(grey, 7, loose),

	disc(black, 7), dots(black, 7, medium), dots(grey, 7, medium), dots(black, 7, dense), fill('#ffdd99') + dots(grey, 6, orchard), fill('#bfbfbf'),

	path('#c0c0c0', 7, 'M0 78L78 0M0 156L156 0M78 156l78-78M0 0l156 156M78 0l78 78M0 78l78 78'), path(grey, 12, 'M51 51l54 54M105 51l-54 54'),
	path(black, 6, 'M0 71h156M0 86h156'), line(black, 6), comb(violet, 69, 87, 113), dots(violet, 7, medium),

	fill(cyan) + '<rect x="6" y="6" width="144" height="144" rx="3" fill="none" stroke="#000" stroke-width="12"/>', fill(cyan), line(black, 12),
	fill('#80ffff') + path(teal, 6, 'M3 3h150v150H3z'),
	fill('#80ffff') + path('#fff', 6, 'M3 3h150v150H3z') + path(teal, 6, 'M3 3h40M62 3h91v91M153 110v43H110M94 153H6V60M3 44V3'), fill('#80ffff'),

	line(teal, 6), path(teal, 6, 'M0 78h47M55 78h47M110 78h46'), fill(cyan), vee(cyan), line(cyan, 18), path(black, 12, 'M0 61h156M0 95h156') + line(cyan, 18),

	line(cyan, 12), path(cyan, 12, 'M0 78h42M58 78h41M117 78h39'),
	path(teal, 16, 'M0 12h156M0 45h156M0 78h156M0 111h156M0 144h156') + path(black, 12, 'M6 6h144v144H6z'),
	path(teal, 16, 'M0 8h156M0 43h156M0 78h156M0 113h156M0 148h156'), line(black, 12), path(teal, 6, 'M0 15h156M0 36h156M0 57h156M0 78h156M0 99h156M0 120h156M0 141h156'),

	path(teal, 7, 'M60 67h36M60 88h36'), dots(teal, 8, [8, 36, 64, 92, 120, 148].map((x) => [x, 78])),
	path(teal, 6, 'M6 15h60M87 15h63M6 57h60M87 57h63M6 99h60M87 99h63M6 141h60M87 141h63M0 36h30M48 36h63M127 36h29M0 78h30M48 78h63M127 78h29M0 120h30M48 120h63M127 120h29'),
	path(teal, 6, 'M48 57h60M9 78h60M87 78h63M48 99h60'), path(cyan, 12, 'M57 57h42v42H57z'), path(cyan, 11, 'M52 61C54 97 102 97 104 61'),

	'', '', '<circle cx="78" cy="78" r="61" fill="none" stroke="#00ffff" stroke-width="18"/>', fill('#ffb833'),
	fill('#ffb833') + dots('#fff', 14, [[43, 44], [113, 44]]), fill('#ffb833') + dots('#99ff80', 14, [[10, 10], [78, 10], [147, 10], [43, 44], [113, 44]])
];

const selected = 52;
document.querySelector('#symbols').innerHTML = symbols.map((drawing, i) => `
	<button class="symbol${i === selected ? ' selected' : ''}" aria-label="Symbol ${i + 1}">
		<svg viewBox="0 0 156 156">${drawing}</svg>
		${i === selected ? '<span class="mark mark-symbol"><span class="digit">1</span></span>' : ''}
	</button>`).join('');
```
